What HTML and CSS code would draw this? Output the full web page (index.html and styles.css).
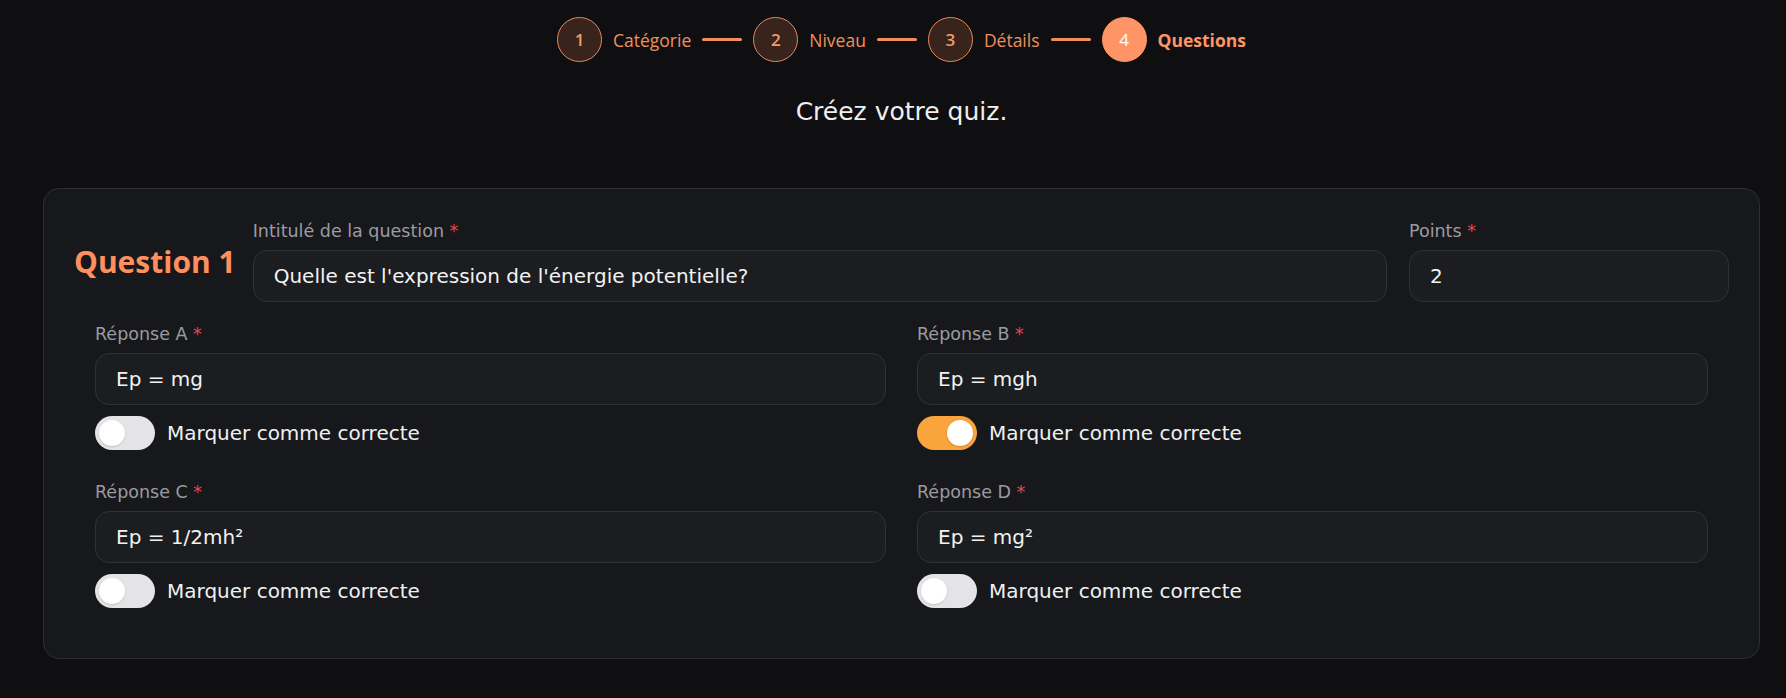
FILE: index.html
```html
<!DOCTYPE html>
<html lang="fr">
<head>
<meta charset="utf-8">
<title>Créez votre quiz</title>
<link rel="stylesheet" href="styles.css">
</head>
<body>
<div class="page">
  <nav class="stepper">
    <div class="step done"><span class="circle">1</span><span class="step-label">Catégorie</span></div>
    <span class="line"></span>
    <div class="step done"><span class="circle">2</span><span class="step-label">Niveau</span></div>
    <span class="line"></span>
    <div class="step done"><span class="circle">3</span><span class="step-label">Détails</span></div>
    <span class="line"></span>
    <div class="step active"><span class="circle">4</span><span class="step-label">Questions</span></div>
  </nav>

  <h1 class="subtitle">Créez votre quiz.</h1>

  <section class="card">
    <div class="q-header">
      <h2 class="q-title">Question 1</h2>
      <div class="field grow">
        <label class="label">Intitulé de la question <span class="req">*</span></label>
        <div class="input">Quelle est l'expression de l'énergie potentielle?</div>
      </div>
      <div class="field points">
        <label class="label">Points <span class="req">*</span></label>
        <div class="input">2</div>
      </div>
    </div>

    <div class="answers">
      <div class="answer">
        <label class="label">Réponse A <span class="req">*</span></label>
        <div class="input">Ep = mg</div>
        <div class="correct"><span class="toggle"><span class="knob"></span></span><span class="correct-text">Marquer comme correcte</span></div>
      </div>
      <div class="answer">
        <label class="label">Réponse B <span class="req">*</span></label>
        <div class="input">Ep = mgh</div>
        <div class="correct"><span class="toggle on"><span class="knob"></span></span><span class="correct-text">Marquer comme correcte</span></div>
      </div>
      <div class="answer">
        <label class="label">Réponse C <span class="req">*</span></label>
        <div class="input">Ep = 1/2mh²</div>
        <div class="correct"><span class="toggle"><span class="knob"></span></span><span class="correct-text">Marquer comme correcte</span></div>
      </div>
      <div class="answer">
        <label class="label">Réponse D <span class="req">*</span></label>
        <div class="input">Ep = mg²</div>
        <div class="correct"><span class="toggle"><span class="knob"></span></span><span class="correct-text">Marquer comme correcte</span></div>
      </div>
    </div>
  </section>
</div>
</body>
</html>
```

FILE: styles.css
```css
* { box-sizing: border-box; }

html, body {
  margin: 0;
  padding: 0;
  background: #0f0f11;
}

body {
  font-family: "DejaVu Sans", Verdana, sans-serif;
  color: #ececec;
}

.page {
  padding: 17px 26px 0 43px;
}

.stepper {
  display: flex;
  align-items: center;
  justify-content: center;
  gap: 11px;
  font-family: "Open Sans", "Noto Sans", sans-serif;
}

.step {
  display: flex;
  align-items: center;
  gap: 11px;
}

.circle {
  width: 45px;
  height: 45px;
  border-radius: 50%;
  display: flex;
  align-items: center;
  justify-content: center;
  font-size: 17px;
  font-weight: 600;
  color: #f59a6c;
  background: #38241d;
  border: 1.5px solid #e98657;
}

.step-label {
  font-size: 17.5px;
  color: #ef8f5e;
}

.step.active .circle {
  background: #ff9566;
  border-color: #ff9566;
  color: #ffffff;
  font-weight: 500;
}

.step.active .step-label {
  font-weight: 700;
  color: #ff9566;
}

.line {
  width: 40px;
  height: 2.5px;
  background: #ef8f5e;
  border-radius: 2px;
}

.subtitle {
  margin: 32px 0 0;
  text-align: center;
  font-weight: 400;
  font-size: 25px;
  line-height: 36px;
  color: #efefef;
}

.card {
  margin-top: 58px;
  width: 1717px;
  background: #17181c;
  border: 1px solid #2d2e33;
  border-radius: 16px;
  padding: 30px 30px 50px 30px;
}

.q-header {
  display: flex;
  align-items: center;
}

.q-title {
  margin: 0 17px 0 0;
  font-family: "Open Sans", "Noto Sans", sans-serif;
  font-weight: 700;
  font-size: 30px;
  line-height: 40px;
  color: #ff8f5c;
  padding-top: 3px;
}

.field {
  display: flex;
  flex-direction: column;
}

.grow { flex: 1; }

.points {
  width: 320px;
  margin-left: 22px;
}

.label {
  font-size: 17.5px;
  line-height: 25px;
  color: #9b9ba1;
  margin-bottom: 6px;
}

.req { color: #e5484d; }

.input {
  height: 52px;
  display: flex;
  align-items: center;
  padding: 0 20px;
  background: #1c1d21;
  border: 1px solid #303136;
  border-radius: 14px;
  font-size: 20px;
  color: #f2f2f2;
  white-space: nowrap;
}

.answers {
  display: grid;
  grid-template-columns: 1fr 1fr;
  column-gap: 31px;
  row-gap: 30px;
  padding: 20px 21px 0;
}

.answer {
  display: flex;
  flex-direction: column;
}

.correct {
  display: flex;
  align-items: center;
  gap: 12px;
  margin-top: 11px;
}

.toggle {
  width: 60px;
  height: 34px;
  border-radius: 17px;
  background: #e4e4e7;
  padding: 4px;
  display: flex;
  justify-content: flex-start;
}

.toggle.on {
  background: #f9a43c;
  justify-content: flex-end;
}

.knob {
  width: 26px;
  height: 26px;
  border-radius: 50%;
  background: #ffffff;
  box-shadow: 0 1px 2px rgba(0,0,0,0.15);
}

.correct-text {
  font-size: 20px;
  color: #f0f0f0;
}
```
